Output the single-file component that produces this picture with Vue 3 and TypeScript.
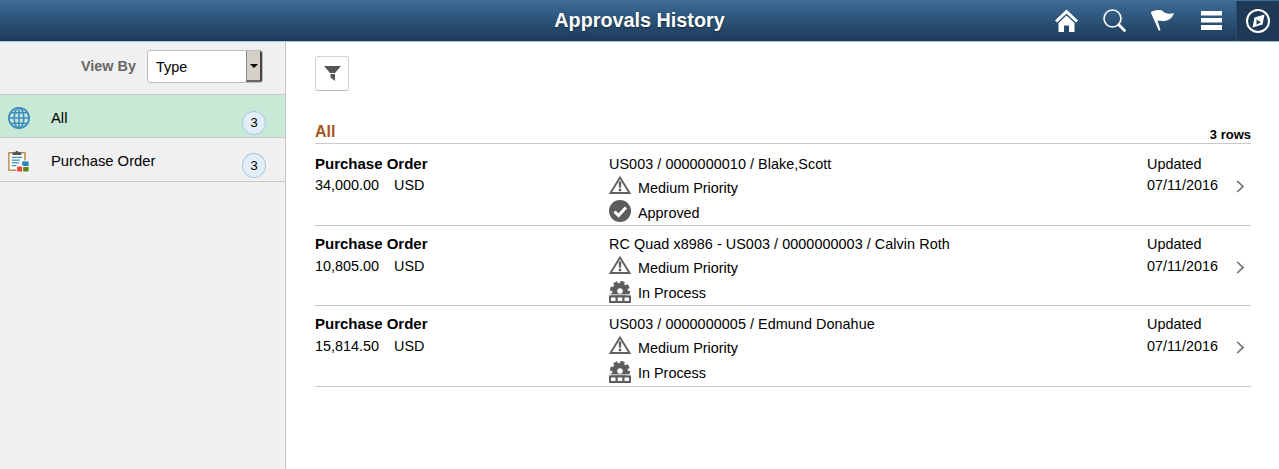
<template>
  <div class="page">
    <header class="banner">
      <h1 class="title">Approvals History</h1>
      <nav class="actions">
        <button class="action home" aria-label="Home">
          <svg width="23" height="23" viewBox="0 0 23 23">
            <path d="M11.5 0.5 L23 11.5 L21 13.5 L11.5 4.6 L2 13.5 L0 11.5 Z" fill="#fff" />
            <path d="M11.5 6.6 L19.5 14 V23 H14 V16.5 H9 V23 H3.5 V14 Z" fill="#fff" />
          </svg>
        </button>
        <button class="action search" aria-label="Search">
          <svg width="23" height="23" viewBox="0 0 23 23">
            <circle cx="9.5" cy="9.5" r="8.5" fill="none" stroke="#fff" stroke-width="1.6" />
            <path d="M15.8 15.8 L21.5 21.5" stroke="#fff" stroke-width="2.8" stroke-linecap="round" />
          </svg>
        </button>
        <button class="action flag" aria-label="Notifications">
          <svg width="23" height="21" viewBox="0 0 23 21">
            <path d="M0 2 C4 0 8 -0.5 11 0.5 C13 3 18 5 23 3 C22 6 20 9 17 10 C14 11.5 10 11 6.5 10.5 L9.5 20 L8 21 L0 3 Z" fill="#fff" />
          </svg>
        </button>
        <button class="action menu" aria-label="Menu">
          <svg width="21" height="19" viewBox="0 0 21 19">
            <rect x="0" y="0" width="21" height="4.5" fill="#fff" />
            <rect x="0" y="7" width="21" height="4.5" fill="#fff" />
            <rect x="0" y="14" width="21" height="5" fill="#fff" />
          </svg>
        </button>
        <button class="action nav" aria-label="NavBar">
          <svg width="24" height="24" viewBox="0 0 24 24">
            <circle cx="12" cy="12" r="11" fill="none" stroke="#fff" stroke-width="2" />
            <path d="M18.5 5.5 L16.5 15.5 L6.5 18.5 L8.5 8.5 Z" fill="#fff" />
            <path d="M10.5 10.5 L15 13.2 L10.5 15.8 Z" fill="#23415f" />
          </svg>
        </button>
      </nav>
    </header>

    <div class="body">
      <aside class="side">
        <div class="view-by">
          <label class="view-label">View By</label>
          <div class="select">
            <span class="select-value">Type</span>
            <span class="select-btn"><i class="caret"></i></span>
          </div>
        </div>
        <ul class="cats">
          <li v-for="c in categories" :key="c.name" class="cat" :class="{ active: c.active }">
            <span class="cat-icon">
              <svg v-if="c.icon === 'globe'" width="22" height="22" viewBox="1 1 22 22" fill="none" stroke="#3d8dbf" stroke-width="1.6">
                <circle cx="12" cy="12" r="10.1" stroke-width="1.8" />
                <ellipse cx="12" cy="12" rx="4.8" ry="10.2" />
                <path d="M12 2 V22 M2 12 H22 M3.5 6.8 H20.5 M3.5 17.2 H20.5" />
              </svg>
              <svg v-else width="22" height="24" viewBox="0 0 24 25">
                <rect x="1" y="3.5" width="17.5" height="19" fill="#fff" stroke="#b5823f" stroke-width="1.5" />
                <path d="M5 4.5 V3 H8 C8 1 11.5 1 11.5 3 H14.5 V4.5 V6 H5 Z" fill="#555" />
                <path d="M4 8.5 H15.5 M4 11.5 H13 M4 14.5 H12 M4 17.5 H9" stroke="#3d8dbf" stroke-width="1.2" />
                <rect x="15" y="12.5" width="8" height="8" fill="#2a80b9" stroke="#fff" />
                <rect x="9.5" y="18" width="7" height="6.5" fill="#e8493a" stroke="#fff" />
                <rect x="16" y="18.5" width="7" height="6" fill="#5a8a14" stroke="#fff" />
              </svg>
            </span>
            <span class="cat-name">{{ c.name }}</span>
            <span class="badge">{{ c.count }}</span>
          </li>
        </ul>
      </aside>

      <main class="main">
        <button class="filter" aria-label="Filter">
          <svg width="17" height="15" viewBox="0 0 17 15">
            <path d="M0 0 H17 L11 7 H6 Z" fill="#555" />
            <path d="M6.5 8 H11 V15 L6.5 11.5 Z" fill="#555" />
          </svg>
        </button>

        <div class="list-head">
          <h2 class="list-title">All</h2>
          <span class="row-count">3 rows</span>
        </div>

        <div
          v-for="(r, i) in rows"
          :key="r.id"
          class="row"
          :class="{ first: i === 0, last: i === rows.length - 1 }"
        >
          <div class="col-type">
            <div class="type-name">Purchase Order</div>
            <div class="amount"><span>{{ r.amount }}</span><span>USD</span></div>
          </div>
          <div class="col-info">
            <div class="desc">{{ r.desc }}</div>
            <div class="line">
              <svg class="ico warn" width="22" height="18" viewBox="0 0 22 18">
                <path d="M11 1.6 L20.6 17 H1.4 Z" fill="#fff" stroke="#5f5f5f" stroke-width="1.9" />
                <path d="M9.6 5.6 H12.4 L12 11.8 H10 Z M9.7 12.8 H12.3 V15.3 H9.7 Z" fill="#5f5f5f" />
              </svg>
              <span>Medium Priority</span>
            </div>
            <div class="line">
              <svg v-if="r.status === 'Approved'" class="ico" width="22" height="22" viewBox="0 0 22 22">
                <circle cx="11" cy="11" r="11" fill="#5c5c5c" />
                <path d="M5.5 11.5 L9.5 15.5 L17 7.5" fill="none" stroke="#fff" stroke-width="3" />
              </svg>
              <svg v-else class="ico gear" width="22" height="22" viewBox="0 0 22 22">
                <circle cx="11" cy="10" r="8" fill="#5c5c5c" />
                <circle cx="11" cy="10" r="8.8" fill="none" stroke="#5c5c5c" stroke-width="2.6" stroke-dasharray="4.2 2.71" />
                <circle cx="11" cy="10" r="2.8" fill="#fff" />
                <rect x="0" y="13.4" width="22" height="1" fill="#fff" />
                <rect x="0" y="14.4" width="22" height="7.6" fill="#5c5c5c" />
                <path d="M2 16.4 H6.5 V20 H2 Z M8.7 16.4 H13.3 V20 H8.7 Z M15.5 16.4 H20 V20 H15.5 Z" fill="#fff" />
              </svg>
              <span>{{ r.status }}</span>
            </div>
          </div>
          <div class="col-date">
            <div class="date-label">Updated</div>
            <div class="date">07/11/2016</div>
          </div>
          <svg class="chev" width="9" height="13" viewBox="0 0 9 13">
            <path d="M1.2 1 L7 6.5 L1.2 12" fill="none" stroke="#707070" stroke-width="1.7" />
          </svg>
        </div>
      </main>
    </div>
  </div>
</template>

<script setup lang="ts">
interface Category {
  name: string
  count: number
  icon: 'globe' | 'order'
  active?: boolean
}

interface ApprovalRow {
  id: number
  amount: string
  desc: string
  status: string
}

const categories: Category[] = [
  { name: 'All', count: 3, icon: 'globe', active: true },
  { name: 'Purchase Order', count: 3, icon: 'order' }
]

const rows: ApprovalRow[] = [
  { id: 1, amount: '34,000.00', desc: 'US003 / 0000000010 / Blake,Scott', status: 'Approved' },
  { id: 2, amount: '10,805.00', desc: 'RC Quad x8986 - US003 / 0000000003 / Calvin Roth', status: 'In Process' },
  { id: 3, amount: '15,814.50', desc: 'US003 / 0000000005 / Edmund Donahue', status: 'In Process' }
]
</script>

<style>
html,
body {
  margin: 0;
  background: #fff;
}
</style>

<style scoped>
.page {
  width: 1279px;
  height: 469px;
  display: flex;
  flex-direction: column;
  overflow: hidden;
  font-family: "Liberation Sans", Arial, sans-serif;
  font-size: 14.4px;
  color: #000;
}

.banner {
  height: 42px;
  flex: none;
  box-sizing: border-box;
  border-bottom: 1px solid #a9c4da;
  background: linear-gradient(180deg, #3d6c96 0%, #1c3a59 100%);
  display: flex;
  align-items: center;
  justify-content: center;
  position: relative;
}

.title {
  margin: 0;
  font-size: 19.8px;
  font-weight: bold;
  color: #fff;
  text-shadow: 0 1px 2px rgba(0, 0, 0, 0.5);
}

.actions {
  position: absolute;
  right: 0;
  top: 0;
  height: 41px;
  display: flex;
  align-items: center;
}

.action {
  border: 0;
  background: none;
  padding: 0;
  display: flex;
  align-items: center;
  justify-content: center;
  height: 41px;
}

.home { width: 23px; margin-right: 25px; }
.search { width: 23px; margin-right: 25px; }
.flag { width: 23px; margin-right: 27px; }
.menu { width: 21px; margin-right: 14px; }
.nav {
  width: 43px;
  height: 40px;
  padding-left: 1px;
  background: #1f3a57;
  box-shadow: inset 1px 0 0 #2d4c6d;
}

.body {
  flex: 1;
  display: flex;
  min-height: 0;
}

.side {
  width: 286px;
  flex: none;
  box-sizing: border-box;
  background: #f0f0f0;
  border-right: 1px solid #c4c4c4;
}

.view-by {
  height: 53px;
  box-sizing: border-box;
  border-bottom: 1px solid #c9c9c9;
  display: flex;
  align-items: flex-start;
  padding: 8px 0 0 81px;
}

.view-label {
  width: 66px;
  line-height: 33px;
  font-weight: bold;
  color: #666;
}

.select {
  width: 116px;
  height: 33px;
  box-sizing: border-box;
  display: flex;
  background: #fff;
  border: 1px solid #bdbdbd;
  border-radius: 3px;
  overflow: hidden;
}

.select-value {
  flex: 1;
  padding-left: 8px;
  line-height: 32px;
}

.select-btn {
  width: 16px;
  box-sizing: border-box;
  background: #d4d0c8;
  border-left: 1px solid #8a8a8a;
  border-right: 2px solid #444;
  border-bottom: 2px solid #666;
  display: flex;
  align-items: center;
  justify-content: center;
}

.caret {
  width: 0;
  height: 0;
  border-left: 4px solid transparent;
  border-right: 4px solid transparent;
  border-top: 4px solid #000;
}

.cats {
  list-style: none;
  margin: 0;
  padding: 0;
}

.cat {
  height: 44px;
  box-sizing: border-box;
  border-bottom: 1px solid #c9c9c9;
  display: flex;
  align-items: flex-start;
  position: relative;
}

.cat.active {
  background: #c8e9d6;
  height: 43px;
}

.cat-icon {
  width: 51px;
  flex: none;
  padding: 11px 0 0 8px;
  box-sizing: border-box;
  display: block;
  height: 40px;
}

.cat.active .cat-icon {
  padding-top: 12px;
}

.cat-name {
  font-size: 14.8px;
  line-height: 20px;
  padding-top: 13px;
}

.badge {
  position: absolute;
  left: 242px;
  top: 15px;
  width: 24px;
  height: 25px;
  box-sizing: border-box;
  border-radius: 50%;
  border: 1px solid #a6c4e0;
  background: #e4eef8;
  font-size: 13px;
  line-height: 23px;
  text-align: center;
}

.cat.active .badge {
  top: 16px;
  height: 24px;
  line-height: 22px;
}

.main {
  flex: 1;
  min-width: 0;
  padding: 14px 28px 0 29px;
}

.filter {
  display: flex;
  align-items: center;
  justify-content: center;
  width: 34px;
  height: 35px;
  padding: 0;
  box-sizing: border-box;
  background: #fff;
  border: 1px solid #d2d2d2;
  border-bottom-color: #bbb;
  border-radius: 3px;
}

.list-head {
  margin-top: 30px;
  height: 23px;
  box-sizing: border-box;
  border-bottom: 1px solid #c9c9c9;
  display: flex;
  justify-content: space-between;
  align-items: flex-end;
}

.list-title {
  margin: 0;
  font-size: 16px;
  line-height: 22px;
  font-weight: bold;
  color: #a5551d;
}

.row-count {
  font-size: 13px;
  font-weight: bold;
  line-height: 16px;
}

.row {
  height: 80px;
  box-sizing: border-box;
  border-bottom: 1px solid #c9c9c9;
  display: flex;
  align-items: flex-start;
  position: relative;
  padding-top: 8px;
}

.row.first {
  height: 82px;
  padding-top: 10px;
}

.row.last {
  height: 81px;
}

.col-type {
  width: 294px;
  flex: none;
}

.type-name {
  font-size: 15px;
  font-weight: bold;
  line-height: 20px;
}

.amount {
  line-height: 20px;
  margin-top: 2px;
  display: flex;
  gap: 15px;
}

.row.first .amount {
  margin-top: 1px;
}

.col-info {
  width: 538px;
  flex: none;
}

.desc {
  line-height: 20px;
  margin-bottom: 1px;
  letter-spacing: 0.05px;
}

.line {
  height: 25px;
  display: flex;
  align-items: center;
  gap: 7px;
}

.ico {
  flex: none;
  margin-bottom: 3px;
}

.ico.warn {
  margin-bottom: 5px;
}

.ico.gear {
  margin-bottom: 2px;
}

.col-date {
  line-height: 22px;
  margin-top: -1px;
}

.row.first .date {
  margin-top: -1px;
}

.date-label {
  line-height: 22px;
}

.chev {
  position: absolute;
  right: 6px;
  top: 35px;
}

.row.first .chev {
  top: 36px;
}
</style>
